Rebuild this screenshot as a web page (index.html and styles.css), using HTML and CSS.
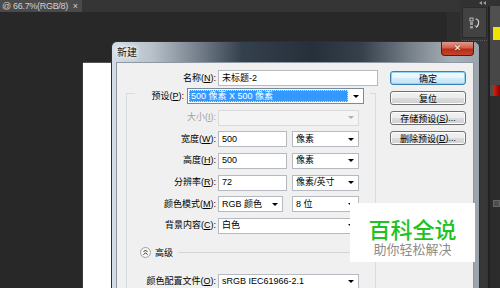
FILE: index.html
```html
<!DOCTYPE html>
<html lang="zh-CN">

<head>
    <meta charset="UTF-8">
    <meta name="viewport" content="width=device-width, initial-scale=1.0">
    <title>新建</title>
    <link rel="stylesheet" href="styles.css">
</head>

<body>
    <div class="app">
        <div class="workspace">
            <div class="tabbar">
                <div class="tab"><span class="tab-name">@ 66.7%(RGB/8)</span><span class="tab-close">×</span></div>
            </div>
            <div class="docarea">
                <div class="doc-view">
                    <div class="canvas"></div>
                </div>
                <div class="vscroll"></div>
            </div>
        </div>
        <div class="panels">
            <div class="panel-head">
                <svg width="7" height="4" viewBox="0 0 7 4"><path d="M3 0 L0 2 L3 4 Z M7 0 L4 2 L7 4 Z" fill="#9a9a9a"/></svg>
            </div>
            <div class="panel-cols">
                <div class="dock">
                    <div class="dock-box">
                        <svg width="12" height="12" viewBox="0 0 12 12">
                            <rect x="1" y="1" width="3" height="3" fill="none" stroke="#b5b5b5"/>
                            <rect x="1" y="5" width="3" height="3" fill="#9a9a9a"/>
                            <rect x="1" y="9" width="3" height="2.5" fill="#9a9a9a"/>
                            <path d="M6.5 2 C10 2 11 7 7.5 10" fill="none" stroke="#d0d0d0" stroke-width="1.2"/>
                            <path d="M6 8.5 L7.5 10.5 L9 8.8" fill="none" stroke="#d0d0d0"/>
                        </svg>
                    </div>
                    <div class="dock-rest"></div>
                </div>
                <div class="side">
                    <div class="side-top"></div>
                    <div class="swatch-row"><div class="swatch yellow"></div></div>
                    <div class="side-mid"></div>
                    <div class="swatch-row red-row"><div class="swatch red"></div></div>
                    <div class="side-low"><div class="side-icon"></div></div>
                </div>
            </div>
        </div>

        <div class="dialog">
            <div class="titlebar">
                <span class="title">新建</span>
                <div class="close">✕</div>
            </div>
            <div class="dlg-body">
                <div class="client">
                    <div class="form-col">
                        <div class="row">
                            <label class="lbl">名称(<u>N</u>):</label>
                            <div class="field w-name">未标题-2</div>
                        </div>
                        <div class="group">
                            <div class="preset-row">
                                <label class="lbl lbl-preset">预设(<u>P</u>):</label>
                                <div class="select preset">
                                    <span class="sel-val">500 像素 X 500 像素</span>
                                    <span class="drop"><span class="arrow"></span></span>
                                </div>
                            </div>
                            <div class="group-rows">
                                <div class="row">
                                    <label class="lbl lbl-g disabled">大小(<u>I</u>):</label>
                                    <div class="select w-full off"><span class="arrow"></span></div>
                                </div>
                                <div class="row">
                                    <label class="lbl lbl-g">宽度(<u>W</u>):</label>
                                    <div class="field w-num">500</div>
                                    <div class="select w-unit"><span>像素</span><span class="arrow"></span></div>
                                </div>
                                <div class="row">
                                    <label class="lbl lbl-g">高度(<u>H</u>):</label>
                                    <div class="field w-num">500</div>
                                    <div class="select w-unit"><span>像素</span><span class="arrow"></span></div>
                                </div>
                                <div class="row">
                                    <label class="lbl lbl-g">分辨率(<u>R</u>):</label>
                                    <div class="field w-num">72</div>
                                    <div class="select w-unit"><span>像素/英寸</span><span class="arrow"></span></div>
                                </div>
                                <div class="row">
                                    <label class="lbl lbl-g">颜色模式(<u>M</u>):</label>
                                    <div class="select w-mode"><span>RGB 颜色</span><span class="arrow"></span></div>
                                    <div class="select w-bits"><span>8 位</span><span class="arrow"></span></div>
                                </div>
                                <div class="row">
                                    <label class="lbl lbl-g">背景内容(<u>C</u>):</label>
                                    <div class="select w-full"><span>白色</span><span class="arrow"></span></div>
                                </div>
                            </div>
                            <div class="advanced">
                                <svg width="11" height="11" viewBox="0 0 11 11">
                                    <circle cx="5.5" cy="5.5" r="5" fill="#f7f7f7" stroke="#a0a0a0"/>
                                    <path d="M3.5 5 L5.5 3 L7.5 5 M3.5 7.7 L5.5 5.7 L7.5 7.7" fill="none" stroke="#333"/>
                                </svg>
                                <span class="adv-text">高级</span>
                                <span class="adv-line"></span>
                            </div>
                            <div class="row profile-row">
                                <label class="lbl lbl-g">颜色配置文件(<u>O</u>):</label>
                                <div class="select w-full"><span>sRGB IEC61966-2.1</span><span class="arrow"></span></div>
                            </div>
                        </div>
                    </div>
                    <div class="btn-col">
                        <button class="btn default">确定</button>
                        <button class="btn">复位</button>
                        <button class="btn">存储预设(<u>S</u>)...</button>
                        <button class="btn">删除预设(<u>D</u>)...</button>
                    </div>
                </div>
            </div>
        </div>

        <div class="watermark">
            <div class="wm-title">百科全说</div>
            <div class="wm-sub">助你轻松解决</div>
        </div>
    </div>
</body>

</html>
```

FILE: styles.css
```css
* {
    margin: 0;
    padding: 0;
    box-sizing: border-box;
}

body {
    width: 500px;
    height: 288px;
    overflow: hidden;
    background: #282828;
    font-family: "Liberation Sans", "Noto Sans CJK SC", sans-serif;
    font-size: 9px;
    line-height: 1;
    color: #000;
}

.app {
    position: relative;
    display: flex;
    width: 500px;
    height: 288px;
    overflow: hidden;
}

/* workspace */
.workspace {
    width: 460px;
    display: flex;
    flex-direction: column;
}

.tabbar {
    height: 12px;
    flex-shrink: 0;
    background: #353535;
    display: flex;
}

.tab {
    width: 82px;
    background: #4a4a4a;
    color: #d0d0d0;
    display: flex;
    align-items: center;
    padding-left: 2px;
    font-size: 9px;
    white-space: nowrap;
}

.tab-name {
    letter-spacing: -0.3px;
}

.tab-close {
    margin-left: auto;
    margin-right: 4px;
}

.docarea {
    flex: 1;
    display: flex;
}

.doc-view {
    flex: 1;
    padding: 51px 0 0 83px;
}

.canvas {
    width: 320px;
    height: 225px;
    background: #fff;
    box-shadow: 0 -1px 0 #555, -1px 0 0 #3c3c3c;
}

.vscroll {
    width: 13px;
    background: #2e2e2e;
}

/* right panels */
.panels {
    width: 40px;
    background: #2b2b2b;
    display: flex;
    flex-direction: column;
}

.panel-head {
    height: 6px;
    flex-shrink: 0;
    background: #323232;
    display: flex;
    align-items: center;
    padding-left: 19px;
}

.panel-cols {
    flex: 1;
    display: flex;
}

.dock {
    width: 28px;
    background: #343434;
    display: flex;
    flex-direction: column;
    gap: 2px;
    padding: 1px 1px 0 2px;
}

.dock-box {
    height: 31px;
    flex-shrink: 0;
    background: #424242;
    border: 1px solid #2a2a2a;
    display: flex;
    align-items: center;
    justify-content: center;
}

.dock-rest {
    flex: 1;
    background: #373737;
    border-top: 1px dotted #5a5a5a;
}

.side {
    width: 12px;
    border-left: 2px solid #222;
    display: flex;
    flex-direction: column;
}

.side-top {
    height: 21px;
    flex-shrink: 0;
    background: #505050;
}

.swatch-row {
    height: 13px;
    flex-shrink: 0;
    background: #4d4d4d;
    padding-left: 3px;
}

.swatch {
    height: 100%;
}

.yellow {
    background: #f0e400;
}

.side-mid {
    height: 45px;
    flex-shrink: 0;
    background: #474747;
}

.red-row {
    height: 11px;
}

.red {
    background: linear-gradient(90deg, #e02010, #8a0000);
}

.side-low {
    flex: 1;
    background: #2c2c2c;
    padding: 104px 0 0 3px;
}

.side-icon {
    width: 7px;
    height: 7px;
    background: #4e4e4e;
    border: 1px solid #666;
}

/* dialog */
.dialog {
    position: absolute;
    left: 111px;
    top: 41px;
    width: 369px;
    height: 247px;
    border: 1px solid #26303a;
    border-bottom: 0;
    border-radius: 6px 6px 0 0;
    background: linear-gradient(90deg, #d4dde6 0, #b8c1c9 40px, #6f7a86 90px, #34404c 130px, #26303b 200px, #36414c 250px, #78828b 300px, #a9b0b6 340px, #9aa2aa 369px);
    display: flex;
    flex-direction: column;
}

.titlebar {
    position: relative;
    height: 20px;
    flex-shrink: 0;
    display: flex;
    align-items: center;
    padding-left: 5px;
}

.title {
    font-family: "Noto Sans CJK SC", sans-serif;
    font-size: 10px;
    color: #111;
    text-shadow: 0 0 3px #fff, 0 0 5px #fff, 0 0 7px #fff;
}

.close {
    position: absolute;
    right: 5px;
    top: 0;
    width: 33px;
    height: 14px;
    border: 1px solid #5a1a12;
    border-top: 0;
    border-radius: 0 0 4px 4px;
    background: linear-gradient(#e29a8c 0, #d0604c 45%, #b52d18 55%, #c8442c 100%);
    color: #fff;
    font-family: "DejaVu Sans", sans-serif;
    font-size: 9px;
    font-weight: bold;
    display: flex;
    align-items: center;
    justify-content: center;
    text-shadow: 0 0 2px #6a1a10;
}

.dlg-body {
    flex: 1;
    min-height: 0;
    display: flex;
    padding: 0 5px 0 4px;
}

.client {
    flex: 1;
    background: #f0f0f0;
    box-shadow: inset 1px 1px 0 #8c98a4, inset -1px 0 0 #8c98a4;
    display: flex;
    overflow: hidden;
}

.form-col {
    width: 262px;
    flex-shrink: 0;
    padding-top: 8px;
}

.row {
    display: flex;
    height: 16px;
    flex-shrink: 0;
    align-items: stretch;
}

.lbl {
    width: 100px;
    margin-right: 2px;
    text-align: right;
    display: flex;
    align-items: center;
    justify-content: flex-end;
    white-space: nowrap;
}

.lbl-g {
    width: 89px;
}

.lbl-preset {
    width: 49px;
    margin-right: 3px;
}

.disabled {
    color: #a3a3a3;
}

.field,
.select {
    border: 1px solid #b5b9c0;
    background: #fff;
    display: flex;
    align-items: center;
    padding-left: 3px;
    white-space: nowrap;
    overflow: hidden;
}

.arrow {
    margin-left: auto;
    margin-right: 4px;
    width: 0;
    height: 0;
    border-left: 3px solid transparent;
    border-right: 3px solid transparent;
    border-top: 3px solid #000;
}

.w-name {
    width: 160px;
}

.w-full {
    width: 141px;
}

.w-num {
    width: 69px;
}

.w-unit {
    width: 67px;
    margin-left: 5px;
}

.w-mode {
    width: 65px;
}

.w-bits {
    width: 67px;
    margin-left: 9px;
}

.off {
    background: #f4f4f4;
    border-color: #d9d9d9;
}

.off .arrow {
    border-top-color: #b0b0b0;
}

.group {
    margin: 7px 0 0 10px;
    width: 250px;
    height: 200px;
    border: 1px solid #d5dde3;
    border-bottom: 0;
}

.preset-row {
    display: flex;
    height: 16px;
    margin: -6px 0 0 8px;
    width: 235px;
    background: #f0f0f0;
}

.preset {
    width: 177px;
    padding: 1px;
    border-color: #7a8a9a;
}

.sel-val {
    flex: 1;
    align-self: stretch;
    background: #3399ff;
    color: #fff;
    display: flex;
    align-items: center;
    padding-left: 2px;
    outline: 1px dotted #c8e0ff;
    outline-offset: -1px;
}

.drop {
    width: 14px;
    display: flex;
    align-items: center;
}

.drop .arrow {
    margin-right: 3px;
}

.group-rows {
    display: flex;
    flex-direction: column;
    gap: 5.67px;
    margin-top: 5.67px;
}

.advanced {
    display: flex;
    align-items: center;
    height: 14px;
    margin-top: 12px;
    padding-left: 13px;
}

.adv-text {
    margin-left: 4px;
    font-family: "Noto Sans CJK SC", sans-serif;
}

.adv-line {
    flex: 1;
    height: 1px;
    margin-left: 5px;
    background: #d3d3d3;
}

.profile-row {
    margin-top: 14px;
}

.btn-col {
    margin-left: 12px;
    padding-top: 9px;
    display: flex;
    flex-direction: column;
    gap: 6px;
}

.btn {
    width: 76px;
    height: 14px;
    flex-shrink: 0;
    border: 1px solid #707070;
    border-radius: 3px;
    background: linear-gradient(#f3f3f3 0, #ebebeb 50%, #dddddd 50%, #cfcfcf 100%);
    box-shadow: inset 0 0 0 1px #fcfcfc;
    font-family: "Liberation Sans", "Noto Sans CJK SC", sans-serif;
    font-size: 9px;
    color: #000;
    display: flex;
    align-items: center;
    justify-content: center;
}

.btn.default {
    border-color: #3c7fb1;
    background: linear-gradient(#f4fbfe 0, #e6f5fc 50%, #d3eefb 50%, #bde4f7 100%);
    box-shadow: inset 0 0 0 1px #98d4f0;
}

/* watermark */
.watermark {
    position: absolute;
    left: 350px;
    top: 203px;
    width: 125px;
    height: 59px;
    background: #fff;
    display: flex;
    flex-direction: column;
    align-items: center;
    padding-top: 13px;
    font-family: "Noto Sans CJK SC", sans-serif;
}

.wm-title {
    font-size: 22px;
    line-height: 24px;
    font-weight: 500;
    color: #1fc21f;
}

.wm-sub {
    margin-top: 2px;
    font-size: 13px;
    line-height: 14px;
    color: #8c8c8c;
}
```
